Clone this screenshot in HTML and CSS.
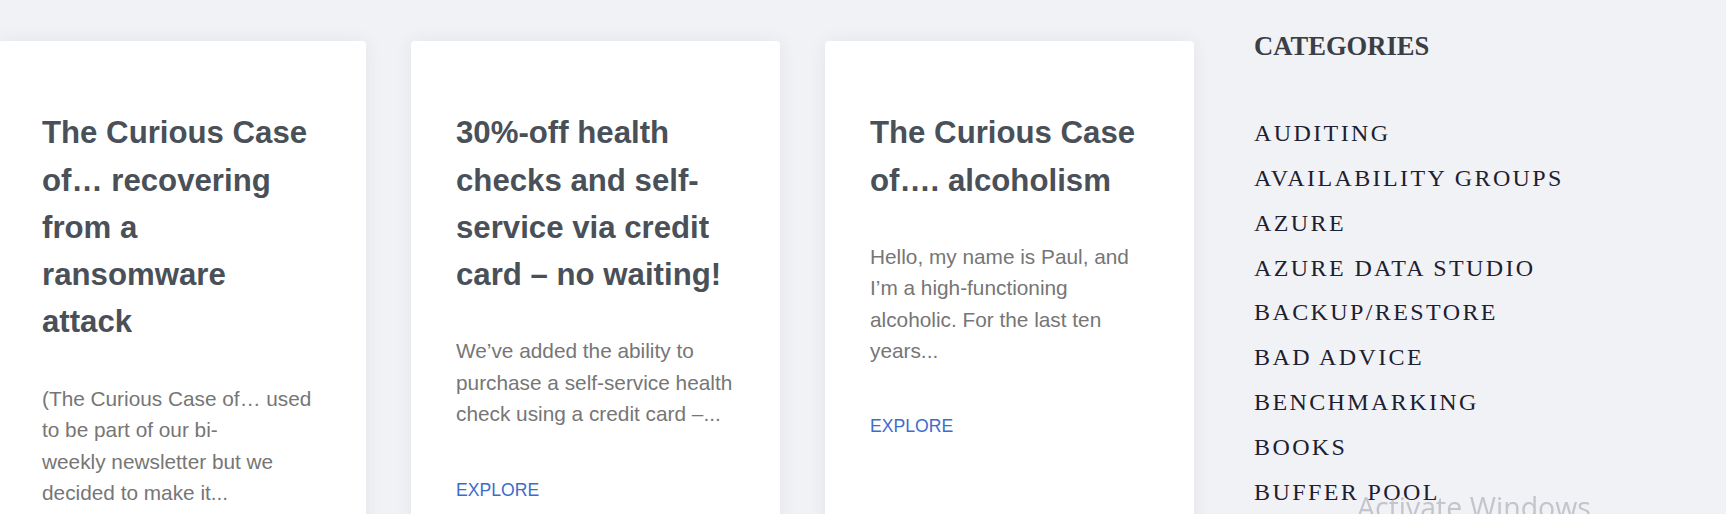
FILE: index.html
```html
<!DOCTYPE html>
<html lang="en">
<head>
<meta charset="utf-8">
<title>Blog</title>
<link rel="stylesheet" href="styles.css">
</head>
<body>
<div class="page">
  <main class="cards">
    <article class="card">
      <h2 class="card-title">The Curious Case of… recovering from a ransomware attack</h2>
      <p class="card-excerpt">(The Curious Case of… used to be part of our bi-<br>weekly newsletter but we decided to make it...</p>
      <a class="card-link" href="#">Explore</a>
    </article>
    <article class="card">
      <h2 class="card-title">30%-off health checks and self-service via credit card – no waiting!</h2>
      <p class="card-excerpt">We’ve added the ability to purchase a self-service health check using a credit card –...</p>
      <a class="card-link" href="#">Explore</a>
    </article>
    <article class="card">
      <h2 class="card-title">The Curious Case of…. alcoholism</h2>
      <p class="card-excerpt">Hello, my name is Paul, and I’m a high-functioning alcoholic. For the last ten years...</p>
      <a class="card-link" href="#">Explore</a>
    </article>
  </main>
  <aside class="sidebar">
    <h3 class="sidebar-title">CATEGORIES</h3>
    <ul class="cat-list">
      <li><a href="#">Auditing</a></li>
      <li><a href="#">Availability Groups</a></li>
      <li><a href="#">Azure</a></li>
      <li><a href="#">Azure Data Studio</a></li>
      <li><a href="#">Backup/Restore</a></li>
      <li><a href="#">Bad Advice</a></li>
      <li><a href="#">Benchmarking</a></li>
      <li><a href="#">Books</a></li>
      <li><a href="#">Buffer Pool</a></li>
    </ul>
  </aside>
</div>
<div class="os-watermark">Activate Windows</div>
</body>
</html>
```

FILE: styles.css
```css
html, body {
  margin: 0;
  padding: 0;
}

body {
  background: #f1f2f6;
  font-family: "Liberation Sans", Arial, sans-serif;
  overflow: hidden;
}

.page {
  display: flex;
  align-items: flex-start;
  gap: 60px;
  margin-left: -3px;
}

.cards {
  display: flex;
  gap: 45px;
  align-items: stretch;
  padding-top: 41px;
}

.card {
  width: 369px;
  box-sizing: border-box;
  min-height: 640px;
  background: #ffffff;
  border-radius: 4px;
  box-shadow: 0 0 18px rgba(40, 50, 70, 0.07);
  padding: 68.3px 45px 45px;
}

.card-title {
  margin: 0 0 37px;
  font-size: 31.2px;
  line-height: 47.3px;
  font-weight: 700;
  color: #4a5058;
}

.card-excerpt {
  margin: 0 0 46.8px;
  font-size: 20.8px;
  line-height: 31.4px;
  color: #767676;
}

.card-link {
  display: block;
  font-size: 17.6px;
  line-height: 26.4px;
  text-transform: uppercase;
  text-decoration: none;
  color: #3d6dcc;
}

.sidebar {
  flex: 1;
  padding-top: 31px;
}

.sidebar-title {
  margin: 0;
  font-family: "Liberation Serif", "Times New Roman", serif;
  font-size: 26.6px;
  line-height: 31.9px;
  font-weight: 700;
  color: #3b3e44;
}

.cat-list {
  list-style: none;
  margin: 48.3px 0 0;
  padding: 0;
}

.cat-list li {
  font-family: "Liberation Serif", "Times New Roman", serif;
  font-size: 24px;
  line-height: 44.8px;
  letter-spacing: 2.4px;
  text-transform: uppercase;
}

.cat-list a {
  color: #1c2030;
  text-decoration: none;
}

.os-watermark {
  position: fixed;
  left: 1357px;
  top: 489px;
  font-family: "Open Sans", "Noto Sans", sans-serif;
  font-size: 28.5px;
  line-height: 36px;
  color: rgba(150, 152, 160, 0.5);
  pointer-events: none;
  white-space: nowrap;
}
```
